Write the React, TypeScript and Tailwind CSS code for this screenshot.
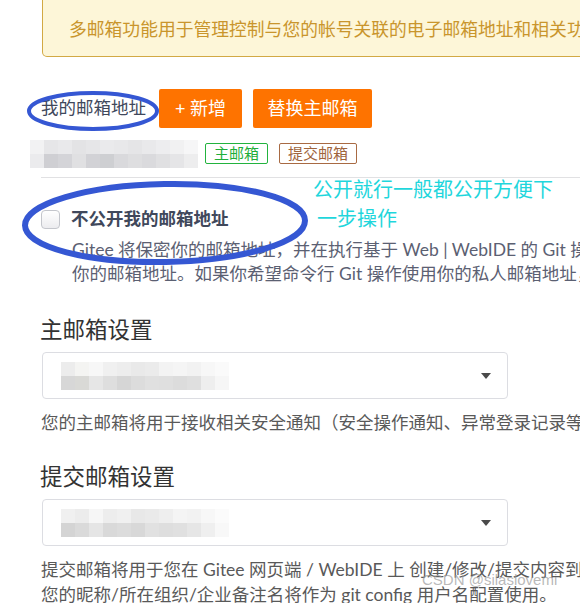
const FONT = "font-['Lato','Noto_Sans_CJK_SC',sans-serif]"

// pixelated (blurred) email placeholder
const Pixels = ({ rows, cell }: { rows: string[][]; cell: number }) => (
  <div className="flex flex-col blur-[0.6px]">
    {rows.map((row, i) => (
      <div key={i} className="flex">
        {row.map((c, j) => (
          <div key={j} style={{ width: cell, height: cell, background: c }} />
        ))}
      </div>
    ))}
  </div>
)

const emailRows = [
  ['#f2f2f3', '#e6e6e8', '#e9e9eb', '#e3e3e5', '#e6e6e8', '#eaeaec', '#e8e8ea', '#e5e5e7', '#e9e9eb', '#ededef', '#f1f1f2', '#f6f6f7'],
  ['#ebebed', '#cfcfd3', '#d4d4d8', '#e0e0e2', '#d2d2d6', '#cecfd2', '#d9d9dc', '#dedee0', '#dadadd', '#e0e0e2', '#e5e5e7', '#ededee'],
]

const selectRows1 = [
  ['#ececec', '#f4f4f2', '#f7f7f7', '#f0f0f0', '#ededed', '#e9e9e9', '#ebebeb', '#f3f3f3', '#f5f5f5', '#f2f2f2', '#f7f7f7', '#fafafa'],
  ['#d7d7d7', '#d9d9d6', '#e6e6e6', '#dedede', '#d6d6d6', '#dcdcdc', '#e0e0e0', '#dfdfdf', '#dcdcdc', '#dfdfdf', '#eeeeee', '#f6f6f6'],
]

const selectRows2 = [
  ['#f0f0f0', '#ececec', '#f6f6f6', '#ededed', '#f0f0f0', '#e8e8e8', '#eaeaea', '#eeeeee', '#f4f4f4', '#f2f2f2', '#f7f7f7', '#fbfbfb'],
  ['#d4d4d4', '#dadada', '#e5e5e5', '#d9d9d9', '#dcdcdc', '#d8d8d8', '#e1e1e1', '#dedede', '#e0e0e0', '#e6e6e6', '#efefef', '#f8f8f8'],
]

const Select = ({ rows }: { rows: string[][] }) => (
  <div className="w-[466px] h-[47px] border border-[#dcdde2] rounded-[4px] flex items-center pl-[18px] pr-[14px] justify-between">
    <Pixels rows={rows} cell={14} />
    <svg width="10" height="6" viewBox="0 0 10 6" className="mr-[2px]">
      <path d="M0 0h10L5 6z" fill="#4a4a4a" />
    </svg>
  </div>
)

export default function App() {
  return (
    <div className={`relative w-[580px] h-[603px] overflow-hidden bg-white ${FONT}`}>
      <div className="w-[1100px] pl-[41px]">
        {/* notice */}
        <div className="h-[57px] w-[1000px] ml-[1px] border border-t-0 border-[#d2a944] bg-[#fdf6d8] rounded-b-[5px] flex items-center pl-[26px] pt-[3px] text-[17.8px] text-[#c9952c] whitespace-nowrap">
          多邮箱功能用于管理控制与您的帐号关联的电子邮箱地址和相关功能
        </div>

        {/* my email header */}
        <div className="mt-[32px] h-[39px] flex items-center">
          <span className="text-[17.5px] text-[#40485b] whitespace-nowrap">我的邮箱地址</span>
          <button className="ml-[13px] h-[39px] w-[83px] rounded-[2px] bg-[#fe7300] text-white text-[18px] whitespace-nowrap">
            + 新增
          </button>
          <button className="ml-[11px] h-[39px] w-[119px] rounded-[2px] bg-[#fe7300] text-white text-[18px] whitespace-nowrap">
            替换主邮箱
          </button>
        </div>

        {/* email row */}
        <div className="mt-[15px] h-[21px] flex items-center">
          <div className="ml-[-11px]">
            <Pixels rows={emailRows} cell={14} />
          </div>
          <span className="ml-[7px] h-[21px] px-[8px] border border-[#22b33e] rounded-[2px] text-[15px] leading-[19px] text-[#1fae3a] whitespace-nowrap">
            主邮箱
          </span>
          <span className="ml-[11px] h-[21px] px-[8px] border border-[#a86a43] rounded-[2px] text-[15px] leading-[19px] text-[#a0643c] whitespace-nowrap">
            提交邮箱
          </span>
        </div>

        <div className="mt-[13px] h-px bg-[#e1e1e3]" />

        {/* checkbox */}
        <div className="mt-[31px] h-[20px] flex items-center">
          <div className="w-[19px] h-[19px] rounded-[4px] border border-[#c4c6cc] bg-gradient-to-b from-white to-[#ececef]" />
          <span className="ml-[11px] text-[17.5px] font-bold text-[#40485b] whitespace-nowrap">不公开我的邮箱地址</span>
        </div>
        <div className="mt-[9px] pl-[31px] text-[17.5px] leading-[24px] text-[#5b6072] whitespace-nowrap">
          <div>Gitee 将保密你的邮箱地址，并在执行基于 Web | WebIDE 的 Git 操作时使用该地址</div>
          <div>你的邮箱地址。如果你希望命令行 Git 操作使用你的私人邮箱地址，请取消勾选</div>
        </div>

        {/* primary email */}
        <div className="mt-[28px] ml-[-1px] text-[22.5px] leading-[32px] text-[#333] whitespace-nowrap">主邮箱设置</div>
        <div className="mt-[6px] ml-[1px]">
          <Select rows={selectRows1} />
        </div>
        <div className="mt-[12px] text-[17.5px] leading-[24px] text-[#595959] whitespace-nowrap">
          您的主邮箱将用于接收相关安全通知（安全操作通知、异常登录记录等）
        </div>

        {/* commit email */}
        <div className="mt-[26px] ml-[-1px] text-[22.5px] leading-[32px] text-[#333] whitespace-nowrap">提交邮箱设置</div>
        <div className="mt-[6px] ml-[1px]">
          <Select rows={selectRows2} />
        </div>
        <div className="mt-[11px] text-[17.5px] leading-[25px] text-[#595959] whitespace-nowrap">
          <div>提交邮箱将用于您在 Gitee 网页端 / WebIDE 上 创建/修改/提交内容到仓库时使用</div>
          <div>您的昵称/所在组织/企业备注名将作为 git config 用户名配置使用。</div>
        </div>
      </div>

      {/* annotations */}
      <div className="absolute left-[313px] top-[174px] text-[20px] leading-[29px] text-[#1fd6dc] whitespace-nowrap font-['Noto_Sans_CJK_SC',sans-serif]">
        <div>公开就行一般都公开方便下</div>
        <div className="ml-[4px]">一步操作</div>
      </div>
      <svg className="absolute left-0 top-0 pointer-events-none" width="580" height="603">
        <ellipse cx="93" cy="111" rx="64" ry="18" fill="none" stroke="#3557d3" strokeWidth="4" />
        <ellipse cx="165" cy="223" rx="140" ry="39" fill="none" stroke="#3557d3" strokeWidth="6" transform="rotate(-1 165 223)" />
      </svg>
      <div className="absolute left-[422px] top-[569px] text-[15px] text-[#9a9a9a]/70 whitespace-nowrap font-['Liberation_Sans',sans-serif]">
        CSDN @silaslovemi
      </div>
    </div>
  )
}
